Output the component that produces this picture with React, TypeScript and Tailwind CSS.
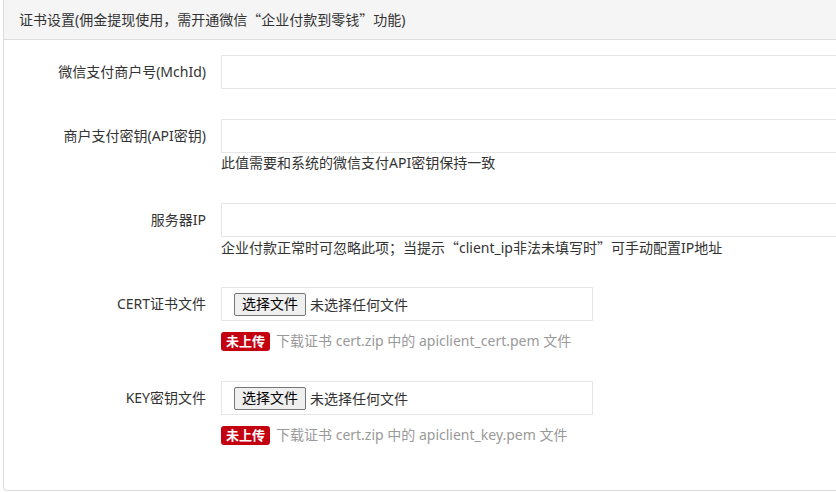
import React from "react";

const font = {
  fontFamily: '"Noto Sans", "Noto Sans CJK SC", sans-serif',
};

// curly quotes drawn full-width, as in the CJK font
function Q({ children }: { children: string }) {
  return <span style={{ fontFamily: '"Noto Sans CJK SC", sans-serif' }}>{children}</span>;
}

function Label({ children }: { children: React.ReactNode }) {
  return (
    <label className="w-[202px] shrink-0 pt-[7px] text-right text-[14px] leading-[20px] text-[#333]">
      {children}
    </label>
  );
}

function TextRow({ label, help }: { label: string; help?: React.ReactNode }) {
  return (
    <div className="mb-[30px] flex gap-[15px]">
      <Label>{label}</Label>
      <div className="flex-1">
        <input
          type="text"
          className="block h-[34px] w-full border border-[#e6e6e6] bg-white px-3 text-[14px] outline-none"
        />
        {help && <p className="h-[20px] overflow-visible text-[14px] leading-[20px] text-[#333]">{help}</p>}
      </div>
    </div>
  );
}

function FileRow({ label, file }: { label: string; file: string }) {
  return (
    <div className="mb-[30px] flex gap-[15px]">
      <Label>{label}</Label>
      <div className="flex-1">
        <div className="flex h-[34px] w-[372px] items-center border border-[#e6e6e6] bg-white pl-[12px]">
          <button
            type="button"
            className="h-[23px] rounded-[2px] border border-[#767676] bg-[#efefef] px-[7px] text-[14px] leading-[20px] text-black"
          >
            选择文件
          </button>
          <span className="ml-[4px] text-[14px] text-[#333]">未选择任何文件</span>
        </div>
        <div className="mt-[10px] flex items-center gap-[6px] text-[14px] leading-[20px]">
          <span className="rounded-[3px] bg-[#c40010] px-[5px] text-[13px] font-bold leading-[19px] text-white">
            未上传
          </span>
          <span className="text-[#999]">
            下载证书 cert.zip 中的 {file} 文件
          </span>
        </div>
      </div>
    </div>
  );
}

export default function App() {
  return (
    <div className="h-[493px] w-[836px] overflow-hidden bg-white" style={font}>
      <div className="ml-[3px] w-[900px] rounded-b-[4px] border-x border-b border-[#dddddd] bg-white">
        <div className="flex h-[40px] items-center border-b border-[#dddddd] bg-[#f5f5f5] pb-[1px] pl-[15px] text-[14px] text-[#333]">
          <span>
            证书设置(佣金提现使用，需开通微信<Q>“</Q>企业付款到零钱<Q>”</Q>功能)
          </span>
        </div>
        <div className="pt-[15px] pb-[15px]">
          <TextRow label="微信支付商户号(MchId)" />
          <TextRow label="商户支付密钥(API密钥)" help="此值需要和系统的微信支付API密钥保持一致" />
          <TextRow
            label="服务器IP"
            help={
              <>
                企业付款正常时可忽略此项；当提示<Q>“</Q>client_ip非法未填写时<Q>”</Q>可手动配置IP地址
              </>
            }
          />
          <FileRow label="CERT证书文件" file="apiclient_cert.pem" />
          <FileRow label="KEY密钥文件" file="apiclient_key.pem" />
        </div>
      </div>
    </div>
  );
}
